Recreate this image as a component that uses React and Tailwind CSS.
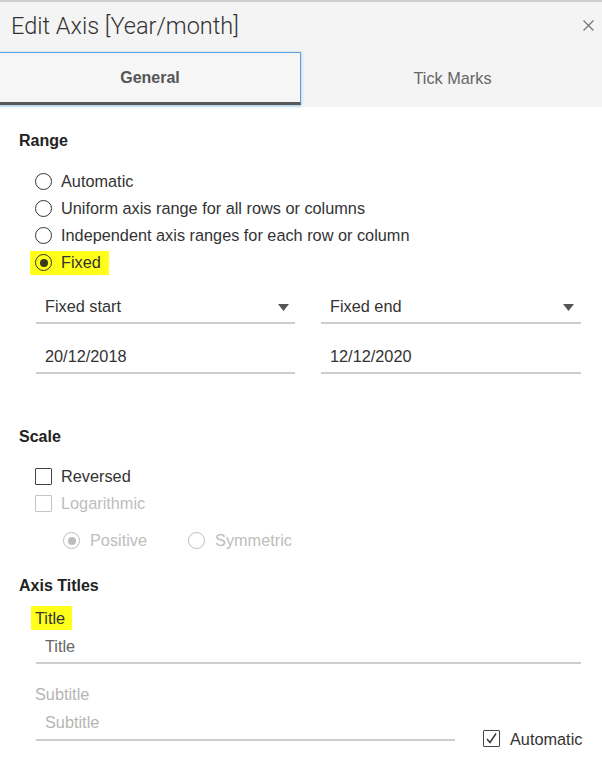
import React from "react";

const Radio = ({ checked, disabled }) => (
  <span
    className={`flex h-[17px] w-[17px] shrink-0 items-center justify-center rounded-full border-[1.5px] ${
      disabled ? "border-[#bdbdbd]" : "border-[#333]"
    }`}
  >
    {checked && (
      <span
        className={`h-[8px] w-[8px] rounded-full ${
          disabled ? "bg-[#bdbdbd]" : "bg-[#3a3a1a]"
        }`}
      />
    )}
  </span>
);

const Checkbox = ({ checked, disabled }) => (
  <span
    className={`flex h-[17px] w-[17px] shrink-0 items-center justify-center rounded-[1px] border-[1.5px] ${
      disabled ? "border-[#c4c4c4]" : "border-[#444]"
    }`}
  >
    {checked && (
      <svg width="13" height="13" viewBox="0 0 13 13" fill="none">
        <path d="M2 7 L5 10.5 L11 1.5" stroke="#333" strokeWidth="1.4" />
      </svg>
    )}
  </span>
);

const radioOptions = [
  "Automatic",
  "Uniform axis range for all rows or columns",
  "Independent axis ranges for each row or column",
];

const Underlined = ({ children, className = "" }) => (
  <div
    className={`flex items-center border-b-2 border-[#cdcdcd] pl-[9px] ${className}`}
  >
    {children}
  </div>
);

const Caret = () => (
  <svg width="11" height="7" viewBox="0 0 11 7" className="mt-[4px]">
    <path d="M0 0 H11 L5.5 7 Z" fill="#555" />
  </svg>
);

export default function App() {
  return (
    <div className="h-[770px] w-[602px] overflow-hidden bg-white font-['Liberation_Sans',Arial,sans-serif] text-[16.3px] text-[#333]">
      {/* header */}
      <div className="border-t-2 border-[#cfcfcf] bg-[#f4f4f4]">
        <div className="flex h-[50px] items-center justify-between pl-[11px] pr-[8px]">
          <h1 className="pb-[1px] font-['Roboto',sans-serif] text-[23.5px] font-light text-[#333]">
            Edit Axis [Year/month]
          </h1>
          <svg width="11" height="11" viewBox="0 0 11 11" className="mb-[3px]">
            <path d="M0.5 0.5 L10.5 10.5 M10.5 0.5 L0.5 10.5" stroke="#777" strokeWidth="1.3" />
          </svg>
        </div>
        <div className="flex h-[55px] items-start">
          <div className="-ml-px flex h-[53px] w-[302px] items-center justify-center border border-b-[3px] border-[#5b9fd6] border-b-[#595959] bg-[#f6f6f6] shadow-[0_1px_3px_#8cc2ec]">
            <span className="text-[16px] font-bold text-[#555]">General</span>
          </div>
          <div className="flex h-[53px] flex-1 items-center justify-center pl-[2px] text-[#666]">
            Tick Marks
          </div>
        </div>
      </div>

      {/* body */}
      <div className="px-[19px]">
        <div className="mt-[22px] flex h-[24px] items-center text-[16px] font-bold text-[#222]">
          Range
        </div>

        <div className="mt-[15px] pl-[16px]">
          {radioOptions.map((label) => (
            <div key={label} className="flex h-[27px] items-center gap-[9px]">
              <Radio />
              <span>{label}</span>
            </div>
          ))}
          <div className="flex h-[27px] items-center">
            <div className="-ml-[5px] flex h-[24px] items-center gap-[9px] bg-[#ffff1a] pl-[5px] pr-[8px]">
              <Radio checked />
              <span>Fixed</span>
            </div>
          </div>
        </div>

        <div className="mt-[13px] grid grid-cols-[259px_260px] gap-x-[26px] pl-[17px]">
          <Underlined className="h-[35px] justify-between pr-[6px]">
            <span className="pt-[1px]">Fixed start</span>
            <Caret />
          </Underlined>
          <Underlined className="h-[35px] justify-between pr-[7px]">
            <span className="pt-[1px]">Fixed end</span>
            <Caret />
          </Underlined>
          <Underlined className="mt-[15px] h-[35px] pt-[1px]">20/12/2018</Underlined>
          <Underlined className="mt-[15px] h-[35px] pt-[1px]">12/12/2020</Underlined>
        </div>

        <div className="mt-[51px] flex h-[24px] items-center text-[16px] font-bold text-[#222]">
          Scale
        </div>

        <div className="mt-[14px] pl-[16px]">
          <div className="flex h-[27px] items-center gap-[9px]">
            <Checkbox />
            <span>Reversed</span>
          </div>
          <div className="flex h-[27px] items-center gap-[9px] text-[#bdbdbd]">
            <Checkbox disabled />
            <span>Logarithmic</span>
          </div>
          <div className="mt-[10px] flex h-[27px] items-center pl-[28px] text-[#bdbdbd]">
            <div className="flex items-center gap-[10px]">
              <Radio checked disabled />
              <span>Positive</span>
            </div>
            <div className="ml-[41px] flex items-center gap-[10px]">
              <Radio disabled />
              <span>Symmetric</span>
            </div>
          </div>
        </div>

        <div className="mt-[20px] flex h-[24px] items-center text-[16px] font-bold text-[#222]">
          Axis Titles
        </div>

        <div className="pl-[12px]">
          <div className="mt-[8px] flex">
            <span className="flex h-[24px] items-center bg-[#ffff1a] pl-[4px] pr-[7px] text-[#333]">
              Title
            </span>
          </div>
          <Underlined className="ml-[5px] mr-[2px] h-[34px] pt-[1px] text-[#666]">Title</Underlined>

          <div className="mt-[18px] flex h-[24px] items-center pl-[4px] text-[#b5b5b5]">
            Subtitle
          </div>
          <div className="flex items-end">
            <Underlined className="ml-[5px] h-[35px] w-[419px] text-[#b5b5b5]">
              Subtitle
            </Underlined>
            <div className="mb-[-10px] ml-[28px] flex items-center gap-[10px]">
              <Checkbox checked />
              <span>Automatic</span>
            </div>
          </div>
        </div>
      </div>
    </div>
  );
}
